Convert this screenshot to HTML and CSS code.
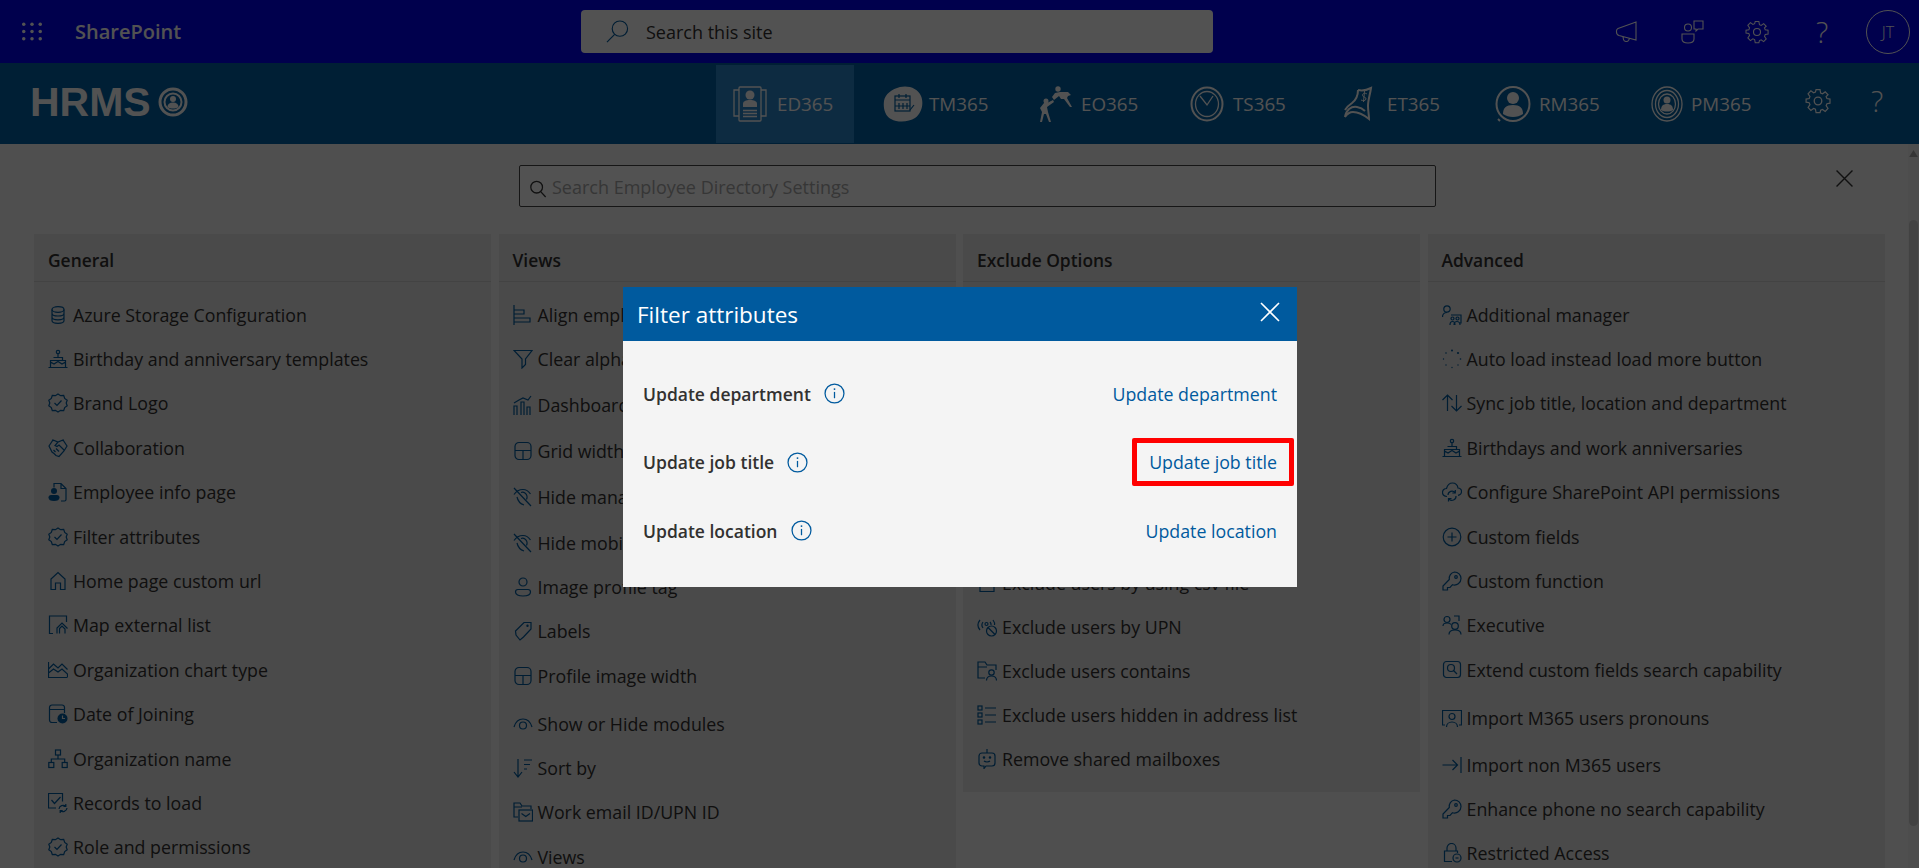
FILE: index.html
```html
<!DOCTYPE html>
<html lang="en">
<head>
<meta charset="utf-8">
<title>Filter attributes</title>
<link rel="stylesheet" href="styles.css">
</head>
<body>
<svg class="sprite" aria-hidden="true">
  <symbol id="i-db" viewBox="0 0 20 20"><ellipse cx="10" cy="4.500" rx="6" ry="2.800"/><path d="M4 4.500v11c0 1.600 2.700 2.800 6 2.800s6-1.200 6-2.800v-11M4 8.200c0 1.600 2.700 2.800 6 2.800s6-1.200 6-2.800M4 12c0 1.600 2.700 2.800 6 2.800s6-1.200 6-2.800"/></symbol>
  <symbol id="i-cake" viewBox="0 0 20 20"><circle cx="10" cy="3" r="1.700"/><path d="M10 5v3M5.500 8.500h9v3M2.500 18V11.500h15V18M.5 18.500h19M2.500 13l3.500 2 4-2.500 4 2.500 3.500-2"/></symbol>
  <symbol id="i-badge" viewBox="0 0 20 20"><path d="M10 1l2.600 1.700 3.100-.2 1 2.900 2.500 1.900-1 2.700 1 2.700-2.500 1.900-1 2.900-3.100-.2L10 19l-2.600-1.700-3.100.2-1-2.900L.8 12.700l1-2.700-1-2.700 2.500-1.900 1-2.900 3.100.2z"/><path d="M6.500 10l2.500 2.500 4.500-5"/></symbol>
  <symbol id="i-hands" viewBox="0 0 20 20"><path d="M1 8l4-6 5 2 5-2 4 6-3 5-5 5.500-3-1-2-2-2-1.500zM10 4L7 7.500l2 1 2-1.500 5 5M5.500 12l2 2M8 10.500l3 3M4 2l2 .8M16 2l-2 .8"/></symbol>
  <symbol id="i-docp" viewBox="0 0 20 20"><path d="M6 5.500V1.500h7l5 5v11a1.500 1.500 0 01-1.500 1.500H13M13 1.500v5h5"/><circle class="f" cx="6" cy="9" r="3"/><path class="f" d="M.5 15.500c0-1.500 1-2.500 2.500-2.500h6c1.500 0 2.500 1 2.500 2.500 0 2.500-2 3.500-5.500 3.500S.5 18 .5 15.500z"/></symbol>
  <symbol id="i-home" viewBox="0 0 20 20"><path d="M3 18.500V8l7-6.500L17 8v10.500h-4.500V12h-5v6.500z"/></symbol>
  <symbol id="i-map" viewBox="0 0 20 20"><path d="M5 18.500H1.500V1h17v6M9 18.500V13l5-5 5.500 5.500M11.500 18.500v-5l2.500-2.500 3 3v4.500"/></symbol>
  <symbol id="i-area" viewBox="0 0 20 20"><path d="M.5 2v15.500h19M.5 9l5-5 4.500 4 4-4 5.500 5.500M.5 13l5-4 4.500 3 4-3 5.500 5v3"/></symbol>
  <symbol id="i-calc" viewBox="0 0 20 20"><path d="M9 18.500H4A2.500 2.500 0 011.500 16V3.500A2.500 2.500 0 014 1h10a2.500 2.500 0 012.500 2.500V9M1.500 5.500h15"/><circle class="f" cx="14.500" cy="14.500" r="5"/><path class="w" d="M14.500 11.500v3h2.500"/></symbol>
  <symbol id="i-org" viewBox="0 0 20 20"><rect x="7.500" y="1" width="5" height="5"/><rect x=".8" y="13.500" width="5" height="5"/><rect x="14.200" y="13.500" width="5" height="5"/><path d="M10 6v4M3.300 13.500V10h13.400v3.500"/></symbol>
  <symbol id="i-rec" viewBox="0 0 20 20"><path d="M8 15H.5V.5h14v8M3.500 7l3 3.500 6-6.500"/><path d="M11 16a4 4 0 016.800-2.500M19 15a4 4 0 01-6.800 2.500M17.800 11v2.500h-2.500M12.200 20v-2.500h2.500"/></symbol>

  <symbol id="i-align" viewBox="0 0 20 20"><path d="M1 0v20M1 5h10v4H1M1 13h16v4H1"/></symbol>
  <symbol id="i-funnel" viewBox="0 0 20 20"><path d="M1 1.500h18L12.500 10v5.500L9 19v-9z"/></symbol>
  <symbol id="i-bars" viewBox="0 0 20 20"><path d="M1 20v-9h3v9M8 20V7h3v13M14 20v-8h3v8"/><path d="M1 8l5-3 4-2 5 2 3-4"/></symbol>
  <symbol id="i-grid" viewBox="0 0 20 20"><rect x="2" y="1.500" width="16" height="17" rx="4"/><path d="M2 9.500h16M10 9.500v9"/></symbol>
  <symbol id="i-eyeoff" viewBox="0 0 20 20"><path d="M1 1l17 18M1 7.500C3 4.500 6 2.500 10 2.500c2.800 0 5.500 1.500 7.500 4.500M4 10c1 4.500 4 7 7 8M8 5.500c3-1 5.500 1 6 3.500 .3 1.500 0 2.500-.5 3.500"/></symbol>
  <symbol id="i-person" viewBox="0 0 20 20"><circle cx="10" cy="5" r="4"/><path d="M2.500 15c0-1.500 1-2.500 2.500-2.500h10c1.500 0 2.500 1 2.500 2.500 0 2.500-3 4-7.500 4s-7.500-1.500-7.500-4z"/></symbol>
  <symbol id="i-tag" viewBox="0 0 20 20"><path d="M18 1.500H11L2.500 10l.5 4 4 5 3.500-3L18 8z"/><circle cx="14.500" cy="4.800" r=".6"/></symbol>
  <symbol id="i-eye" viewBox="0 0 20 20"><path d="M1 13C2.500 8 6 5 10 5s7.500 3 9 8"/><circle cx="10" cy="11.500" r="3.500"/></symbol>
  <symbol id="i-sort" viewBox="0 0 20 20"><path d="M5 1v17M1 14l4 5 4-5M11 2h8M11 6.500h6M11 11h3"/></symbol>
  <symbol id="i-fmail" viewBox="0 0 20 20"><path d="M5 15H1V1h6l2 3h9v3M1 5h8"/><rect x="6" y="8" width="13.500" height="11"/><path d="M8.500 11.500l4.300 3 4.200-3"/></symbol>

  <symbol id="i-csv" viewBox="0 0 20 20"><path d="M3 1.500h14v17H3z"/></symbol>
  <symbol id="i-cast" viewBox="0 0 20 20"><path d="M3 3C.5 6 .5 10 3 13M6 5C4.500 7 4.500 9 6 11"/><circle cx="9.500" cy="7" r="1.500"/><path d="M13 5c1 1 1.200 2 1 3M16 3c1.500 2 1.800 3.500 1.500 5"/><circle cx="14.500" cy="14" r="5"/><path d="M11 10.500l7 7"/></symbol>
  <symbol id="i-fperson" viewBox="0 0 20 20"><path d="M8 17H1V1h7l2 3h9v5M1 6h9"/><circle cx="14.500" cy="11.500" r="2.700"/><path d="M9.500 19.500c0-2.500 2-4.500 5-4.500s5 2 5 4.500"/></symbol>
  <symbol id="i-list" viewBox="0 0 20 20"><rect x="1" y="1" width="4" height="4"/><rect x="1" y="8" width="4" height="4"/><rect x="1" y="15" width="4" height="4"/><path d="M8 3h11M8 10h11M8 17h11"/></symbol>
  <symbol id="i-bot" viewBox="0 0 20 20"><path d="M10 0v4M5 4h10a3 3 0 013 3v7a3 3 0 01-3 3H9l-2 2.500V17H5a3 3 0 01-3-3V7a3 3 0 013-3zM7 12c1.500 1.300 4.500 1.300 6 0"/><circle cx="7" cy="8.500" r=".7"/><circle cx="13" cy="8.500" r=".7"/></symbol>

  <symbol id="i-addm" viewBox="0 0 20 20"><circle cx="5" cy="4" r="3.200"/><path d="M.5 12c0-3 2-4.500 4.500-4.500M9 10h10v8h-2M8 20c0-2 1-3.500 2.500-3.500S13 18 13 20M12 20c0-2 1.500-3.500 3-3.500s3 1.500 3 3.500"/><circle cx="10.500" cy="13.500" r="1.500"/><circle cx="15.500" cy="13.500" r="1.500"/></symbol>
  <symbol id="i-spin" viewBox="0 0 20 20"><circle class="f" cx="10" cy="1.500" r="1"/><circle class="f" cx="16" cy="4" r="1.100"/><circle class="f" cx="18.500" cy="10" r=".8"/><circle class="f" cx="16" cy="16" r=".7"/><circle class="f" cx="10" cy="18.500" r=".7"/><circle class="f" cx="4" cy="16" r=".7"/><circle class="f" cx="1.500" cy="10" r=".7"/><circle class="f" cx="4" cy="4" r=".8"/></symbol>
  <symbol id="i-swap" viewBox="0 0 20 20"><path d="M5.500 18V2M.5 7l5-5 5 5M14.500 2v16M9.500 13l5 5 5-5"/></symbol>
  <symbol id="i-cloud" viewBox="0 0 20 20"><path d="M5 14.500c-3 0-4.500-2-4.500-4 0-2.500 2-4 4-4C5.500 3 8 1 10.500 1c3 0 5 2 5.500 5 2 .2 3.500 1.800 3.500 3.500 0 2-1.500 3.500-3.500 3.800"/><path d="M6 13a4 4 0 017-2.500M14 14a4 4 0 01-7 3M13.300 8v3h-3M6.500 19.500v-3h3"/></symbol>
  <symbol id="i-plus" viewBox="0 0 20 20"><circle cx="10" cy="10" r="8.800"/><path d="M10 5.500v9M5.500 10h9"/></symbol>
  <symbol id="i-key" viewBox="0 0 20 20"><path d="M12.500 1a6.500 6.500 0 016.500 6.500 6.500 6.500 0 01-8.500 6.200L8 16.500H5.500V19H1v-4l6.300-6.500A6.500 6.500 0 0112.500 1z"/><circle cx="14" cy="6" r="1.300"/></symbol>
  <symbol id="i-exec" viewBox="0 0 20 20"><circle cx="5" cy="4.500" r="3"/><path d="M1 11c0-2 1.500-3 4-3s3.500.5 4 1.500M12 1h5v5"/><circle cx="13" cy="11" r="3.300"/><path d="M7 19.500c0-3 2.500-4.500 6-4.500s6 1.500 6 4.500"/></symbol>
  <symbol id="i-ssq" viewBox="0 0 20 20"><rect x="1.500" y="1.500" width="17" height="16" rx="3"/><circle cx="9" cy="8" r="3.500"/><path d="M11.500 10.500l3.500 3.500"/></symbol>
  <symbol id="i-screen" viewBox="0 0 20 20"><path d="M3 17H.5V2.500h19V17H17"/><circle cx="10" cy="8.500" r="3"/><path d="M4.500 19c0-3 2.500-5 5.500-5s5.500 2 5.500 5"/></symbol>
  <symbol id="i-into" viewBox="0 0 20 20"><path d="M.5 10h15M10.500 5l5 5-5 5M19 2v16"/></symbol>
  <symbol id="i-lock" viewBox="0 0 20 20"><path d="M5 8V5a4.500 4.500 0 019 0v3M10 18.500H2.500V8h13v2"/><circle cx="15" cy="15" r="4"/><path d="M13.500 15h3"/></symbol>

  <symbol id="t-mega" viewBox="0 0 24 24"><path d="M3 8.500L21 2v18L4 15.500c-1.500-.5-2.500-2-2.500-3.500v-1c0-1 .5-2 1.500-2.500zM8 17l.5 2.500c.5 2.500 4 2.500 5 1l1-2"/></symbol>
  <symbol id="t-chat" viewBox="0 0 24 24"><circle cx="8" cy="7.500" r="3.500"/><path d="M14 1h9v8h-5l-2 2V9h-2zM2 14h12v5c0 2.500-2 4-6 4s-6-1.500-6-4z"/></symbol>
  <symbol id="t-gear" viewBox="0 0 24 24"><circle cx="12" cy="12" r="3.500"/><path d="M10 1h4l.6 3.200 1.900.8 2.700-1.900 2.800 2.800L20.100 7.600l.8 1.900L24 10v4l-3.100.5-.8 1.900 1.900 2.700-2.800 2.800-2.700-1.900-1.900.8L14 23h-4l-.6-3.200-1.900-.8-2.700 1.900L2 18.100l1.900-2.700-.8-1.900L0 13v-3l3.100-.5.800-1.900L2 4.900l2.800-2.800 2.700 1.900 1.900-.8z" transform="translate(1 .6) scale(.92 .96)"/></symbol>
  <symbol id="t-search" viewBox="0 0 24 24"><circle cx="14.500" cy="9" r="8"/><path d="M9 15L1 23"/></symbol>

  <symbol id="l-ed" viewBox="0 0 34 36"><rect x="6" y="1" width="22" height="34" rx="1"/><path d="M6 4H1v26h5M28 4h5v26h-5"/><circle class="f" cx="17" cy="9" r="4.500"/><path class="f" d="M10 21v-3c0-3 3-4 7-4s7 1 7 4v3z"/><path d="M10 24.500h14M10 27.500h14M10 30.500h14"/></symbol>
  <symbol id="l-tm" viewBox="0 0 40 36"><path class="f" d="M17 1c8-2 18 1 21 9 3 7 1 17-6 22-6 4-17 5-24 1C2 30 0 22 1 15 2 8 9 3 17 1z"/><rect class="k" x="12" y="10" width="15" height="15"/><path class="k" d="M12 14h15M16 8v4M23 8v4M16 17v6M20 17v6M24 17v6M12 20h15M27 24l4-5"/></symbol>
  <symbol id="l-eo" viewBox="0 0 36 36"><g class="hv"><circle cx="9" cy="15" r="2.500"/><path d="M3 36l2-10-2-4 4-5h3l6-3 1 2-7 5 1 5 3 10h-2l-3-8-2 0-2 8z"/><circle cx="21" cy="3" r="2.700"/><path d="M15 11l3-4 5-1 8 0 3 3-3 1-1 2 5 9-2 0-6-8-3 0-2-3-5 4z"/></g></symbol>
  <symbol id="l-ts" viewBox="0 0 34 36"><ellipse class="b" cx="17" cy="18" rx="15.500" ry="16.500"/><ellipse cx="17" cy="18" rx="11.500" ry="12.500"/><path d="M10 10l7 9 6-9"/></symbol>
  <symbol id="l-et" viewBox="0 0 36 36"><path class="b" d="M15 4c4 1 9 0 13-2-1 7-3 12-3 18 0 5 1 9 1 13-5-4-11-7-16-7-3 0-6 2-8 5 1-7 6-11 12-10 3 .5 6 2 8 4"/><path class="b" d="M15 4c0 5-2 10-6 13-3 2-5 4-7 7"/><path class="thin" d="M24 8c-2-1.500-5-.5-4.500 1.500s4 1.500 3.500 3.500-3 2-5 1M21.500 5l-1 11"/></symbol>
  <symbol id="l-rm" viewBox="0 0 36 36"><ellipse class="b" cx="18" cy="18" rx="16.500" ry="17"/><circle class="f" cx="18" cy="12" r="6"/><path class="f" d="M8 28c0-6 3-9 10-9s10 3 10 9c-3 2-6 3-10 3s-7-1-10-3z"/><path class="b" d="M3 33l2 2"/></symbol>
  <symbol id="l-pm" viewBox="0 0 32 36"><ellipse cx="16" cy="18" rx="15" ry="17"/><ellipse cx="16" cy="18" rx="11.500" ry="13.500"/><ellipse cx="16" cy="18" rx="8.500" ry="10"/><circle class="f" cx="16" cy="14" r="3.500"/><path class="f" d="M10 24c0-4 2-6 6-6s6 2 6 6c-3 2-9 2-12 0z"/></symbol>
</svg>

<header class="suite">
  <svg class="waffle" viewBox="0 0 24 22"><circle cx="3" cy="3" r="1.900"/><circle cx="12" cy="3" r="1.900"/><circle cx="21" cy="3" r="1.900"/><circle cx="3" cy="11" r="1.900"/><circle cx="12" cy="11" r="1.900"/><circle cx="21" cy="11" r="1.900"/><circle cx="3" cy="19" r="1.900"/><circle cx="12" cy="19" r="1.900"/><circle cx="21" cy="19" r="1.900"/></svg>
  <span class="suite-name">SharePoint</span>
  <div class="site-search">
    <svg class="ico ss-ico"><use href="#t-search"/></svg>
    <span>Search this site</span>
  </div>
  <div class="suite-tools">
    <svg class="ico st"><use href="#t-mega"/></svg>
    <svg class="ico st"><use href="#t-chat"/></svg>
    <svg class="ico st"><use href="#t-gear"/></svg>
    <span class="st qmark">?</span>
    <span class="avatar">JT</span>
  </div>
</header>

<nav class="appbar">
  <div class="logo">
    <span class="logo-text">HRMS</span>
    <svg class="logo-mark" viewBox="0 0 30 30"><circle class="ring" cx="15" cy="15" r="13"/><circle class="ring2" cx="15" cy="15" r="8.500"/><circle class="solid" cx="15" cy="12" r="3"/><path class="solid" d="M9.500 20c0-3 2-4.500 5.500-4.500s5.500 1.500 5.500 4.500c-3 2-8 2-11 0z"/></svg>
  </div>
  <ul class="tabs">
    <li class="tab tab-ed active"><svg class="logo-ic w34"><use href="#l-ed"/></svg><span>ED365</span></li>
    <li class="tab tab-tm"><svg class="logo-ic w40"><use href="#l-tm"/></svg><span>TM365</span></li>
    <li class="tab tab-eo"><svg class="logo-ic w36"><use href="#l-eo"/></svg><span>EO365</span></li>
    <li class="tab tab-ts"><svg class="logo-ic w34"><use href="#l-ts"/></svg><span>TS365</span></li>
    <li class="tab tab-et"><svg class="logo-ic w36"><use href="#l-et"/></svg><span>ET365</span></li>
    <li class="tab tab-rm"><svg class="logo-ic w36"><use href="#l-rm"/></svg><span>RM365</span></li>
    <li class="tab tab-pm"><svg class="logo-ic w32"><use href="#l-pm"/></svg><span>PM365</span></li>
  </ul>
  <svg class="ico bar-gear"><use href="#t-gear"/></svg>
  <span class="bar-q">?</span>
</nav>

<main class="main">
  <div class="content">
    <div class="search-row">
      <div class="settings-search">
        <svg class="ss-glass" viewBox="0 0 20 20"><circle cx="8.500" cy="8.500" r="6.500"/><path d="M13 13.500l5.500 6"/></svg>
        <span>Search Employee Directory Settings</span>
      </div>
      <svg class="settings-close" viewBox="0 0 16 16"><path d="M.5.500l15 15M15.500.500l-15 15"/></svg>
    </div>

    <div class="cols">
      <section class="card">
        <h2>General</h2>
        <ul class="rows">
          <li><svg class="ico"><use href="#i-db"/></svg>Azure Storage Configuration</li>
          <li><svg class="ico"><use href="#i-cake"/></svg>Birthday and anniversary templates</li>
          <li><svg class="ico"><use href="#i-badge"/></svg>Brand Logo</li>
          <li><svg class="ico"><use href="#i-hands"/></svg>Collaboration</li>
          <li><svg class="ico"><use href="#i-docp"/></svg>Employee info page</li>
          <li><svg class="ico"><use href="#i-badge"/></svg>Filter attributes</li>
          <li><svg class="ico"><use href="#i-home"/></svg>Home page custom url</li>
          <li><svg class="ico"><use href="#i-map"/></svg>Map external list</li>
          <li><svg class="ico"><use href="#i-area"/></svg>Organization chart type</li>
          <li><svg class="ico"><use href="#i-calc"/></svg>Date of Joining</li>
          <li><svg class="ico"><use href="#i-org"/></svg>Organization name</li>
          <li><svg class="ico"><use href="#i-rec"/></svg>Records to load</li>
          <li><svg class="ico"><use href="#i-badge"/></svg>Role and permissions</li>
        </ul>
      </section>

      <section class="card">
        <h2>Views</h2>
        <ul class="rows">
          <li><svg class="ico"><use href="#i-align"/></svg>Align employee details</li>
          <li><svg class="ico"><use href="#i-funnel"/></svg>Clear alphabet filter</li>
          <li class="gap-s"><svg class="ico"><use href="#i-bars"/></svg>Dashboard</li>
          <li class="gap-s"><svg class="ico"><use href="#i-grid"/></svg>Grid width</li>
          <li class="gap-s"><svg class="ico"><use href="#i-eyeoff"/></svg>Hide manager</li>
          <li class="gap-s"><svg class="ico"><use href="#i-eyeoff"/></svg>Hide mobile</li>
          <li><svg class="ico"><use href="#i-person"/></svg>Image profile tag</li>
          <li><svg class="ico"><use href="#i-tag"/></svg>Labels</li>
          <li><svg class="ico"><use href="#i-grid"/></svg>Profile image width</li>
          <li class="gap-m"><svg class="ico"><use href="#i-eye"/></svg>Show or Hide modules</li>
          <li><svg class="ico"><use href="#i-sort"/></svg>Sort by</li>
          <li><svg class="ico"><use href="#i-fmail"/></svg>Work email ID/UPN ID</li>
          <li><svg class="ico"><use href="#i-eye"/></svg>Views</li>
        </ul>
      </section>

      <section class="card card-short">
        <h2>Exclude Options</h2>
        <ul class="rows">
          <li class="covered" aria-hidden="true"></li>
          <li><svg class="ico"><use href="#i-csv"/></svg>Exclude users by using csv file</li>
          <li><svg class="ico"><use href="#i-cast"/></svg>Exclude users by UPN</li>
          <li><svg class="ico"><use href="#i-fperson"/></svg>Exclude users contains</li>
          <li><svg class="ico"><use href="#i-list"/></svg>Exclude users hidden in address list</li>
          <li><svg class="ico"><use href="#i-bot"/></svg>Remove shared mailboxes</li>
        </ul>
      </section>

      <section class="card">
        <h2>Advanced</h2>
        <ul class="rows">
          <li><svg class="ico"><use href="#i-addm"/></svg>Additional manager</li>
          <li><svg class="ico"><use href="#i-spin"/></svg>Auto load instead load more button</li>
          <li><svg class="ico"><use href="#i-swap"/></svg>Sync job title, location and department</li>
          <li><svg class="ico"><use href="#i-cake"/></svg>Birthdays and work anniversaries</li>
          <li><svg class="ico"><use href="#i-cloud"/></svg>Configure SharePoint API permissions</li>
          <li><svg class="ico"><use href="#i-plus"/></svg>Custom fields</li>
          <li><svg class="ico"><use href="#i-key"/></svg>Custom function</li>
          <li><svg class="ico"><use href="#i-exec"/></svg>Executive</li>
          <li><svg class="ico"><use href="#i-ssq"/></svg>Extend custom fields search capability</li>
          <li class="gap-l"><svg class="ico"><use href="#i-screen"/></svg>Import M365 users pronouns</li>
          <li class="gap-ml"><svg class="ico"><use href="#i-into"/></svg>Import non M365 users</li>
          <li><svg class="ico"><use href="#i-key"/></svg>Enhance phone no search capability</li>
          <li><svg class="ico"><use href="#i-lock"/></svg>Restricted Access</li>
        </ul>
      </section>
    </div>
  </div>

  <div class="scrollbar">
    <svg class="sb-arrow" viewBox="0 0 10 8"><path d="M5 0l5 8H0z"/></svg>
    <div class="sb-thumb"></div>
  </div>
</main>

<div class="overlay"></div>

<div class="modal" role="dialog" aria-label="Filter attributes">
  <div class="modal-head">
    <span>Filter attributes</span>
    <svg class="modal-x" viewBox="0 0 20 20"><path d="M1 1l18 18M19 1L1 19"/></svg>
  </div>
  <div class="modal-body">
    <div class="m-row">
      <span class="m-label">Update department</span>
      <svg class="info" viewBox="0 0 20 20"><circle cx="10" cy="10" r="9"/><path d="M10 8.500v6"/><circle class="dot" cx="10" cy="5.800" r=".9"/></svg>
      <a class="m-link">Update department</a>
    </div>
    <div class="m-row">
      <span class="m-label">Update job title</span>
      <svg class="info" viewBox="0 0 20 20"><circle cx="10" cy="10" r="9"/><path d="M10 8.500v6"/><circle class="dot" cx="10" cy="5.800" r=".9"/></svg>
      <a class="m-link">Update job title</a>
      <span class="callout"></span>
    </div>
    <div class="m-row">
      <span class="m-label">Update location</span>
      <svg class="info" viewBox="0 0 20 20"><circle cx="10" cy="10" r="9"/><path d="M10 8.500v6"/><circle class="dot" cx="10" cy="5.800" r=".9"/></svg>
      <a class="m-link">Update location</a>
    </div>
  </div>
</div>
</body>
</html>
```

FILE: styles.css
```css
* { box-sizing: border-box; }
html, body { margin: 0; height: 100%; }
body {
  width: 1919px;
  height: 868px;
  overflow: hidden;
  display: flex;
  flex-direction: column;
  background: #f5f5f5;
  font-family: "Open Sans", "Noto Sans", sans-serif;
  color: #323130;
}
ul { list-style: none; margin: 0; padding: 0; }
.sprite { position: absolute; width: 0; height: 0; }
.ico { fill: none; stroke: currentColor; stroke-width: 1.2; flex: none; }
.f { fill: currentColor; stroke: none; }
.w { stroke: #e5e5e5; }
.k { fill: none; stroke: #0060a4; stroke-width: 1.2; }
.hv { fill: currentColor; stroke: none; }
.b { stroke-width: 2; }
.thin { stroke-width: 1; }

/* suite bar */
.suite {
  height: 63px;
  flex: none;
  display: flex;
  align-items: center;
  background: #0000f0;
  color: #fff;
  padding-left: 21px;
}
.waffle { width: 22px; height: 21px; fill: #fff; flex: none; }
.suite-name { margin-left: 32px; width: 106px; font-size: 20px; font-weight: 600; white-space: nowrap; }
.site-search {
  margin-left: 400px;
  width: 632px;
  height: 43px;
  border-radius: 4px;
  background: #fff;
  color: #323130;
  display: flex;
  align-items: center;
  font-size: 18px;
  padding-left: 25px;
}
.site-search span { margin-left: 17px; }
.ss-ico { width: 23px; height: 27px; color: #005a9e; }
.suite-tools { margin-left: auto; display: flex; align-items: center; padding-right: 9px; }
.st { width: 24px; height: 24px; margin-right: 41px; stroke-width: 1.1; }
.qmark { font-size: 29px; font-weight: 300; line-height: 24px; text-align: center; margin-right: 32px; width: 24px; }
.avatar {
  width: 44px; height: 44px; border-radius: 50%;
  border: 1px solid #fff;
  display: flex; align-items: center; justify-content: center;
  font-size: 16px; font-weight: 300;
}

/* app bar */
.appbar {
  height: 81px;
  flex: none;
  background: #0060a4;
  color: #fff;
  display: flex;
  align-items: center;
  padding-left: 30px;
}
.logo { display: flex; align-items: center; width: 686px; margin-top: -3px; }
.logo-text { font-family: "Liberation Sans", sans-serif; font-weight: 700; font-size: 41px; line-height: 1; }
.logo-mark { width: 30px; height: 30px; margin-left: 7px; }
.logo-mark .ring { fill: none; stroke: #fff; stroke-width: 3; }
.logo-mark .ring2 { fill: none; stroke: #fff; stroke-width: 2; }
.logo-mark .solid { fill: #fff; }
.tabs { display: flex; height: 78px; align-items: stretch; }
.tab { display: flex; align-items: center; font-size: 18.8px; padding-left: 29px; gap: 8px; }
.tab span { margin-top: 1px; }
.tab-ed { width: 138px; padding-left: 17px; gap: 10px; }
.tab-tm { width: 154px; gap: 6px; }
.tab-eo { width: 153px; }
.tab-ts { width: 153px; gap: 9px; }
.tab-et { width: 152px; }
.tab-rm { width: 156px; }
.tab-pm { width: 161px; }
.active { background: #2b86cb; }
.logo-ic { height: 36px; flex: none; fill: none; stroke: #fff; stroke-width: 1.3; color: #fff; }
.w32 { width: 32px; } .w34 { width: 34px; } .w36 { width: 36px; } .w40 { width: 40px; }
.bar-gear { width: 26px; height: 26px; margin-left: 22px; margin-top: -6px; stroke-width: 1.2; }
.bar-q { margin-left: 40px; font-size: 29px; font-weight: 300; margin-top: -6px; }

/* main */
.main { flex: 1; min-height: 0; display: flex; overflow: hidden; }
.content { flex: 1; min-width: 0; overflow: hidden; }
.search-row { display: flex; padding: 21px 0 0 519px; height: 90px; }
.settings-search {
  width: 917px;
  height: 42px;
  border: 1px solid #444;
  border-radius: 2px;
  background: #fff;
  display: flex;
  align-items: center;
  padding-left: 9px;
  font-size: 18px;
  color: #a9a9a9;
}
.settings-search span { margin: 2px 0 0 5px; }
.ss-glass { width: 18px; height: 19px; margin-top: 4px; fill: none; stroke: #333; stroke-width: 1.4; flex: none; }
.settings-close { width: 17px; height: 17px; margin: 5px 0 0 400px; fill: none; stroke: #333; stroke-width: 1.3; flex: none; }
.cols { display: flex; gap: 7.5px; padding-left: 34px; align-items: flex-start; }
.card { width: 457px; flex: none; background: #e5e5e5; height: 700px; }
.card-short { height: 558px; }
.card h2 {
  margin: 0;
  height: 48px;
  padding: 5px 0 0 14px;
  display: flex;
  align-items: center;
  font-size: 17.4px;
  font-weight: 600;
  border-bottom: 1px solid #cfcfcf;
}
.rows { padding-top: 10.5px; }
.rows li {
  height: 44.4px;
  display: flex;
  align-items: center;
  padding-left: 14px;
  font-size: 17.8px;
  white-space: nowrap;
}
.rows li .ico { width: 20px; height: 20px; margin-right: 5px; color: #005a9e; }
.rows li.gap-s { margin-top: 1.5px; }
.rows li.gap-m { margin-top: 3.5px; }
.rows li.gap-ml { margin-top: 2px; }
.rows li.gap-l { margin-top: 4px; }
.card-short .rows li { height: 44px; }
.card-short .rows li.covered { height: 268px; }

.scrollbar {
  width: 11px;
  flex: none;
  background: #f0f0f0;
  display: flex;
  flex-direction: column;
  align-items: center;
  padding-top: 6px;
}
.sb-arrow { width: 9px; height: 7px; fill: #a8a8a8; flex: none; }
.sb-thumb { margin-top: 63px; width: 9px; height: 606px; border-radius: 5px; background: #cdcdcd; }

/* overlay and modal */
.overlay { position: fixed; inset: 0; background: rgba(0,0,0,.68); }
.modal {
  position: fixed;
  left: 623px;
  top: 287px;
  width: 674px;
  height: 300px;
  background: #f4f4f4;
  display: flex;
  flex-direction: column;
}
.modal-head {
  height: 54px;
  flex: none;
  background: #005a9e;
  color: #fff;
  font-size: 22.5px;
  display: flex;
  align-items: center;
  justify-content: space-between;
  padding: 0 14px;
}
.modal-x { width: 20px; height: 20px; fill: none; stroke: #fff; stroke-width: 1.6; margin-top: -5px; margin-right: 3px; }
.modal-body { padding: 18.5px 20px 0; }
.m-row { height: 68.5px; display: flex; align-items: center; position: relative; }
.m-label { font-size: 17.5px; font-weight: 600; color: #323130; }
.info { width: 21px; height: 21px; margin-left: 13px; fill: none; stroke: #005a9e; stroke-width: 1.2; flex: none; }
.info .dot { fill: #005a9e; stroke: none; }
.m-link { margin-left: auto; font-size: 17.8px; color: #005a9e; }
.callout {
  position: absolute;
  right: -17px;
  top: 10px;
  width: 162px;
  height: 48px;
  border: 5px solid #f00;
  border-radius: 2px;
}
```
